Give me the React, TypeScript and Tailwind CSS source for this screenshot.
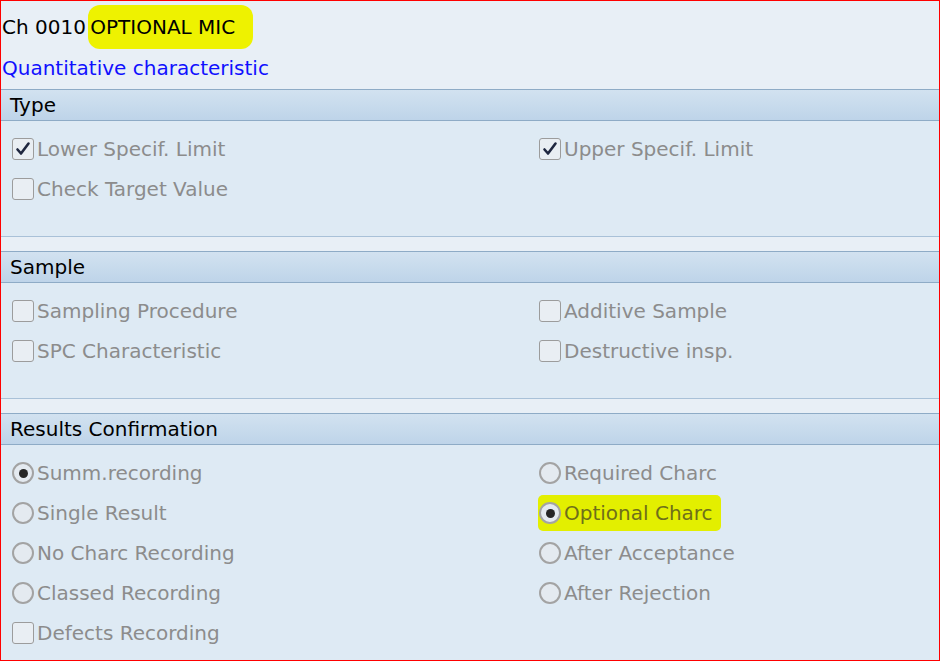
import React from "react";

type Item = { label: string; kind: "check" | "radio"; on?: boolean; mark?: boolean };

const font = { fontFamily: '"DejaVu Sans", "Noto Sans", sans-serif' };

function CheckBox({ on }: { on?: boolean }) {
  return (
    <span className="w-[22px] h-[22px] shrink-0 rounded-[3px] border border-[#9c9c9c] bg-[#e9eef3] flex items-center justify-center">
      {on && (
        <svg width="16" height="16" viewBox="0 0 16 16">
          <path d="M2.5 8.5 L6 12.5 L13.5 2.5" fill="none" stroke="#1f2740" strokeWidth="2.6" strokeLinecap="round" strokeLinejoin="round" />
        </svg>
      )}
    </span>
  );
}

function Radio({ on }: { on?: boolean }) {
  return (
    <span className="w-[22px] h-[22px] shrink-0 rounded-full border-2 border-[#a3a3a3] bg-[#e4eaf0] flex items-center justify-center">
      {on && <span className="w-[9px] h-[9px] rounded-full bg-[#262626]" />}
    </span>
  );
}

function Field({ item }: { item: Item }) {
  return (
    <div className="h-[40px] flex items-center">
      <div
        className={
          item.mark
            ? "flex items-center gap-[3px] bg-[#e3ef00] rounded-[5px] pl-[1px] pr-[8px] py-[4px] -ml-[1px]"
            : "flex items-center gap-[3px]"
        }
      >
        {item.kind === "check" ? <CheckBox on={item.on} /> : <Radio on={item.on} />}
        <span className={item.mark ? "text-[#6f6f1a]" : "text-[#8c8c8c]"}>{item.label}</span>
      </div>
    </div>
  );
}

function Section({
  title,
  left,
  right,
  pb,
}: {
  title: string;
  left: Item[];
  right: Item[];
  pb: string;
}) {
  return (
    <div>
      <div className="h-[32px] border-y border-[#8eabc6] bg-gradient-to-b from-[#d2e2f0] to-[#bed4e9] flex items-center pl-[9px] text-black">
        {title}
      </div>
      <div className={`bg-[#deeaf4] pt-[8px] border-b border-[#a9c1d8] ${pb}`}>
        <div className="grid grid-cols-[527px_1fr] pl-[11px]">
          <div>
            {left.map((it) => (
              <Field key={it.label} item={it} />
            ))}
          </div>
          <div>
            {right.map((it) => (
              <Field key={it.label} item={it} />
            ))}
          </div>
        </div>
      </div>
    </div>
  );
}

export default function App() {
  return (
    <div
      className="w-[940px] h-[661px] border border-[#ff0000] bg-[#e8eff6] overflow-hidden text-[20px] leading-[28px]"
      style={font}
    >
      <div className="pt-[12px] pl-[1px] text-black whitespace-nowrap">
        Ch 0010{" "}
        <span className="bg-[#eef200] rounded-[12px] py-[10px] pl-[2px] pr-[18px] -ml-[4px]">OPTIONAL MIC</span>
      </div>
      <div className="mt-[13px] pl-[1px] text-[#1010ff]">Quantitative characteristic</div>

      <div className="mt-[7px] flex flex-col gap-[14px]">
        <Section
          title="Type"
          pb="pb-[27px]"
          left={[
            { label: "Lower Specif. Limit", kind: "check", on: true },
            { label: "Check Target Value", kind: "check" },
          ]}
          right={[{ label: "Upper Specif. Limit", kind: "check", on: true }]}
        />
        <Section
          title="Sample"
          pb="pb-[27px]"
          left={[
            { label: "Sampling Procedure", kind: "check" },
            { label: "SPC Characteristic", kind: "check" },
          ]}
          right={[
            { label: "Additive Sample", kind: "check" },
            { label: "Destructive insp.", kind: "check" },
          ]}
        />
        <Section
          title="Results Confirmation"
          pb="pb-[20px]"
          left={[
            { label: "Summ.recording", kind: "radio", on: true },
            { label: "Single Result", kind: "radio" },
            { label: "No Charc Recording", kind: "radio" },
            { label: "Classed Recording", kind: "radio" },
            { label: "Defects Recording", kind: "check" },
          ]}
          right={[
            { label: "Required Charc", kind: "radio" },
            { label: "Optional Charc", kind: "radio", on: true, mark: true },
            { label: "After Acceptance", kind: "radio" },
            { label: "After Rejection", kind: "radio" },
          ]}
        />
      </div>
    </div>
  );
}
